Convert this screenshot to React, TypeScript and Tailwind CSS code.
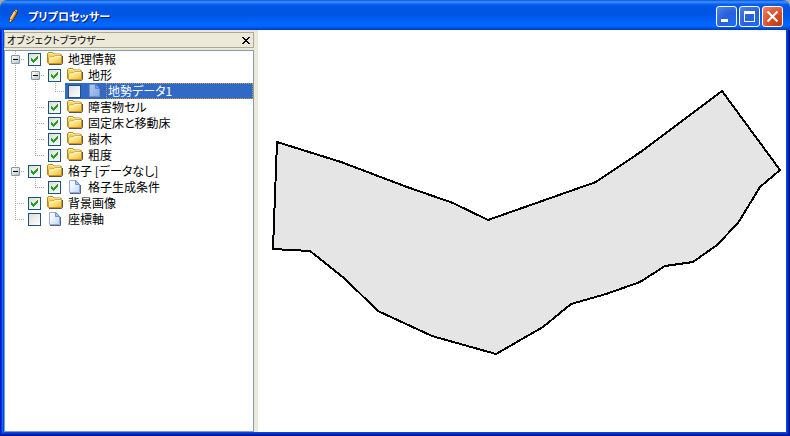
import React, { useState } from 'react'

interface TreeNode {
  id: string
  label: string
  icon: 'folder' | 'file'
  checked: boolean
  children?: TreeNode[]
}

const treeData: TreeNode[] = [
  {
    id: 'geo',
    label: '地理情報',
    icon: 'folder',
    checked: true,
    children: [
      {
        id: 'terrain',
        label: '地形',
        icon: 'folder',
        checked: true,
        children: [{ id: 'terrain-1', label: '地勢データ1', icon: 'file', checked: false }]
      },
      { id: 'obstacle', label: '障害物セル', icon: 'folder', checked: true },
      { id: 'bed', label: '固定床と移動床', icon: 'folder', checked: true },
      { id: 'trees', label: '樹木', icon: 'folder', checked: true },
      { id: 'roughness', label: '粗度', icon: 'folder', checked: true }
    ]
  },
  {
    id: 'grid',
    label: '格子 [データなし]',
    icon: 'folder',
    checked: true,
    children: [{ id: 'grid-cond', label: '格子生成条件', icon: 'file', checked: true }]
  },
  { id: 'background', label: '背景画像', icon: 'folder', checked: true },
  { id: 'axis', label: '座標軸', icon: 'file', checked: false }
]

const outline = [
  [19, 112], [83, 132], [149, 157], [195, 173], [230, 190], [338, 152], [384, 121], [464, 61],
  [522, 140], [502, 157], [480, 193], [459, 215], [435, 232], [407, 236], [382, 252], [348, 264],
  [313, 274], [285, 297], [238, 324], [174, 306], [120, 281], [86, 248], [52, 221], [15, 219]
]

function PencilIcon() {
  return (
    <svg width="16" height="16" viewBox="0 0 16 16" aria-hidden="true">
      <path d="M3 15.5V11L8 2.5 9.5 1 12 2v2.5L7 13z" fill="#4a2c0a" />
      <path d="M4 11.2 8.6 3.4 10.8 4.6 6.4 12.2z" fill="#e8962e" />
      <path d="M4.4 10.8 8.8 3.4" stroke="#ffe3a0" strokeWidth="1.4" />
      <path d="M8.8 2.8 9.8 1.6 11.4 2.4 10.9 4z" fill="#e9c9a0" />
      <path d="M3.8 11.4 6 12.6 3.6 14.4z" fill="#f7dfb4" />
    </svg>
  )
}

function FolderIcon() {
  return (
    <svg width="16" height="16" viewBox="0 0 16 16" aria-hidden="true">
      <defs>
        <linearGradient id="folderFront" x1="0" y1="0" x2="1" y2="1">
          <stop offset="0" stopColor="#fff6b0" />
          <stop offset="0.5" stopColor="#fbe07a" />
          <stop offset="1" stopColor="#edb42f" />
        </linearGradient>
      </defs>
      <path d="M2 13.5h12.5l1-1V5" fill="none" stroke="#5f5638" />
      <path d="M.5 11.5v-9L1.5 1.5h4.2l1.3 1.5h6.5l1 1v8.5H1.5z" fill="#f7d468" stroke="#b98818" />
      <path d="M2 2.5h3.4l1.2 1.4H13" fill="none" stroke="#fff8b8" />
      <path d="M1.5 12.5V7L2.5 6h3.8l1.3-1.4h6.9v7.9z" fill="url(#folderFront)" stroke="#c3922a" strokeWidth="0.8" />
      <path d="M2.4 7h4.2L8 5.5h6" fill="none" stroke="#fffde0" strokeWidth="0.8" />
    </svg>
  )
}

function FileIcon({ selected }: { selected: boolean }) {
  return (
    <svg width="16" height="16" viewBox="0 0 16 16" aria-hidden="true">
      <defs>
        <linearGradient id="filePage" x1="0" y1="0" x2="1" y2="1">
          <stop offset="0" stopColor="#ffffff" />
          <stop offset="0.4" stopColor="#eef5ff" />
          <stop offset="1" stopColor="#b9d6fb" />
        </linearGradient>
      </defs>
      <path d="M3 14.5h10.5V6" fill="none" stroke="#57637f" />
      <path d="M2.5 1.5h6.3l3.7 3.7v8.3h-10z" fill="url(#filePage)" stroke="#93abdf" />
      <path d="M8.5 1.5v4h4z" fill="#a9c8f6" stroke="#5b80cc" strokeWidth="0.8" />
      {selected && <path d="M2 1h7l4 4v10H2z" fill="#316ac5" fillOpacity="0.4" />}
    </svg>
  )
}

interface GuideProps {
  above?: boolean
  below?: boolean
  branch?: boolean
}

// dotted connector cell, one per indent level
function Guide({ above, below, branch }: GuideProps) {
  return (
    <svg
      className="shrink-0"
      width="20"
      height="16"
      stroke="#aca899"
      strokeDasharray="1 1"
      shapeRendering="crispEdges"
      aria-hidden="true"
    >
      {above && <path d="M10.5 0V8" />}
      {below && <path d="M10.5 8V16" />}
      {branch && <path d="M10 8.5H20" />}
    </svg>
  )
}

function CheckBox({ id, checked, onChange }: { id: string; checked: boolean; onChange: () => void }) {
  return (
    <span className="grid shrink-0">
      <input
        id={id}
        type="checkbox"
        checked={checked}
        onChange={onChange}
        className="peer col-start-1 row-start-1 size-[13px] appearance-none border border-[#1c5180] bg-linear-to-br from-[#dcdcd7] to-white"
      />
      <svg
        className="pointer-events-none invisible col-start-1 row-start-1 peer-checked:visible"
        width="13"
        height="13"
        shapeRendering="crispEdges"
        aria-hidden="true"
      >
        <path d="M3 5h1v1h1v1h1V6h1V5h1V4h1V3h1v3H9v1H8v1H7v1H6v1H5V9H4V8H3z" fill="#21a121" />
      </svg>
    </span>
  )
}

interface TreeItemProps {
  node: TreeNode
  isLast: boolean
  // for every parent level: does its vertical line continue past this row
  parentLines: boolean[]
  selectedId: string
  onSelect: (id: string) => void
}

function TreeItem({ node, isLast, parentLines, selectedId, onSelect }: TreeItemProps) {
  const [expanded, setExpanded] = useState(true)
  const [checked, setChecked] = useState(node.checked)
  const selected = node.id === selectedId

  return (
    <li role="treeitem" aria-selected={selected}>
      <div className="flex h-4">
        {parentLines.map((line, i) => (
          <Guide key={i} above={line} below={line} />
        ))}
        <div className="relative shrink-0">
          <Guide above below={!isLast} branch />
          {node.children && (
            <button
              type="button"
              aria-label={expanded ? '折りたたむ' : '展開する'}
              onClick={() => setExpanded(!expanded)}
              className="absolute top-1 left-1.5 flex size-[9px] items-center justify-center rounded-[1px] border border-[#7898b5] bg-linear-to-br from-white to-[#c9c3b5]"
            >
              <svg width="5" height="5" shapeRendering="crispEdges" aria-hidden="true">
                <path d={expanded ? 'M0 2h5v1H0z' : 'M0 2h5v1H0zM2 0h1v5H2z'} fill="#000" />
              </svg>
            </button>
          )}
        </div>
        <div className={`flex flex-1 items-center pl-[3px] ${selected ? 'bg-[#316ac5] text-white' : ''}`}>
          <CheckBox id={node.id} checked={checked} onChange={() => setChecked(!checked)} />
          <span className="ml-1.5 shrink-0">
            {node.icon === 'folder' ? <FolderIcon /> : <FileIcon selected={selected} />}
          </span>
          <label
            htmlFor={node.id}
            onClick={() => onSelect(node.id)}
            className={`ml-[3px] h-4 flex-1 border border-dotted pl-px leading-[14px] whitespace-nowrap ${
              selected ? 'border-[#ce953a]' : 'border-transparent'
            }`}
          >
            {node.label}
          </label>
        </div>
      </div>
      {node.children && expanded && (
        <ul role="group">
          {node.children.map((child, i) => (
            <TreeItem
              key={child.id}
              node={child}
              isLast={i === node.children!.length - 1}
              parentLines={[...parentLines, !isLast]}
              selectedId={selectedId}
              onSelect={onSelect}
            />
          ))}
        </ul>
      )}
    </li>
  )
}

function ObjectBrowser() {
  const [selectedId, setSelectedId] = useState('terrain-1')

  return (
    <aside className="flex w-[254px] shrink-0 flex-col gap-0.5 bg-[#ece9d8] pt-0.5 pr-1">
      <div className="flex h-4 items-center justify-between border border-[#aca899] pr-[3px] pl-0.5">
        <h2 className="text-[10px] leading-[14px] whitespace-nowrap">オブジェクトブラウザー</h2>
        <button type="button" aria-label="閉じる">
          <svg width="8" height="7" shapeRendering="crispEdges" aria-hidden="true">
            <path
              d="M0 0h2v1h1v1h2V1h1V0h2v1H7v1H6v1H5v1h1v1h1v1h1v1H6V6H5V5H3v1H2v1H0V6h1V5h1V4h1V3H2V2H1V1H0z"
              fill="#000"
            />
          </svg>
        </button>
      </div>
      <ul role="tree" className="flex-1 overflow-auto border border-[#7f9db9] bg-white">
        {treeData.map((node, i) => (
          <TreeItem
            key={node.id}
            node={node}
            isLast={i === treeData.length - 1}
            parentLines={[]}
            selectedId={selectedId}
            onSelect={setSelectedId}
          />
        ))}
      </ul>
    </aside>
  )
}

const captionButton = 'grid size-[21px] place-items-center rounded-[3px] border border-white'
const captionBlue = 'bg-[radial-gradient(circle_at_85%_90%,#1c6cf0,#2a5fdc_50%,#4f86ee)]'

function TitleBar() {
  return (
    <header className="flex h-[30px] shrink-0 items-center justify-between rounded-t-[7px] bg-[linear-gradient(#0a50dc_0px,#3d95ff_2px,#0a62f0_4px,#0054e3_7px,#0055e5_15px,#0064fa_22px,#0068ff_26px,#0050e0_28px,#0038c0_30px)] pr-[7px] pl-1.5">
      <div className="flex items-center gap-1.5 pt-0.5">
        <PencilIcon />
        <h1 className="text-[11px] leading-4 font-bold whitespace-nowrap text-white [text-shadow:1px_1px_#0a1883]">
          プリプロセッサー
        </h1>
      </div>
      <div className="flex gap-0.5 pt-0.5">
        <button type="button" aria-label="最小化" className={`${captionButton} ${captionBlue}`}>
          <svg width="19" height="19" shapeRendering="crispEdges" aria-hidden="true">
            <path d="M4 12h7v3H4z" fill="#fff" />
          </svg>
        </button>
        <button type="button" aria-label="最大化" className={`${captionButton} ${captionBlue}`}>
          <svg width="19" height="19" shapeRendering="crispEdges" aria-hidden="true">
            <path d="M4 4h11v11H4zM5 7v7h9V7z" fill="#fff" fillRule="evenodd" />
          </svg>
        </button>
        <button
          type="button"
          aria-label="ウィンドウを閉じる"
          className={`${captionButton} bg-[radial-gradient(circle_at_85%_90%,#c63a10,#dc4f28_50%,#ee8a68)]`}
        >
          <svg width="19" height="19" aria-hidden="true">
            <path d="M4.5 4.5l10 10M14.5 4.5l-10 10" stroke="#fff" strokeWidth="2.2" />
          </svg>
        </button>
      </div>
    </header>
  )
}

export default function App() {
  return (
    <div className="flex h-screen flex-col bg-[#aca899] font-['Noto_Sans_CJK_JP',sans-serif] text-[12px] text-black [font-feature-settings:'palt']">
      <TitleBar />
      <div className="flex min-h-0 flex-1 bg-[#0046e8] px-1 pb-1 shadow-[inset_-1px_-1px_#00138c,inset_1px_0_#0019cf,inset_-2px_-2px_#001ea0,inset_2px_0_#0831d9,inset_-3px_-3px_#0038d8,inset_3px_0_#166aee]">
        <ObjectBrowser />
        <main className="flex min-w-0 flex-1 bg-white">
          <svg className="h-full w-full" viewBox="0 0 528 402" role="img" aria-label="地勢データ1">
            <polygon
              points={outline.map(p => p.join(',')).join(' ')}
              fill="#e5e5e5"
              stroke="#000"
              strokeWidth="2"
              shapeRendering="crispEdges"
            />
          </svg>
        </main>
      </div>
    </div>
  )
}
